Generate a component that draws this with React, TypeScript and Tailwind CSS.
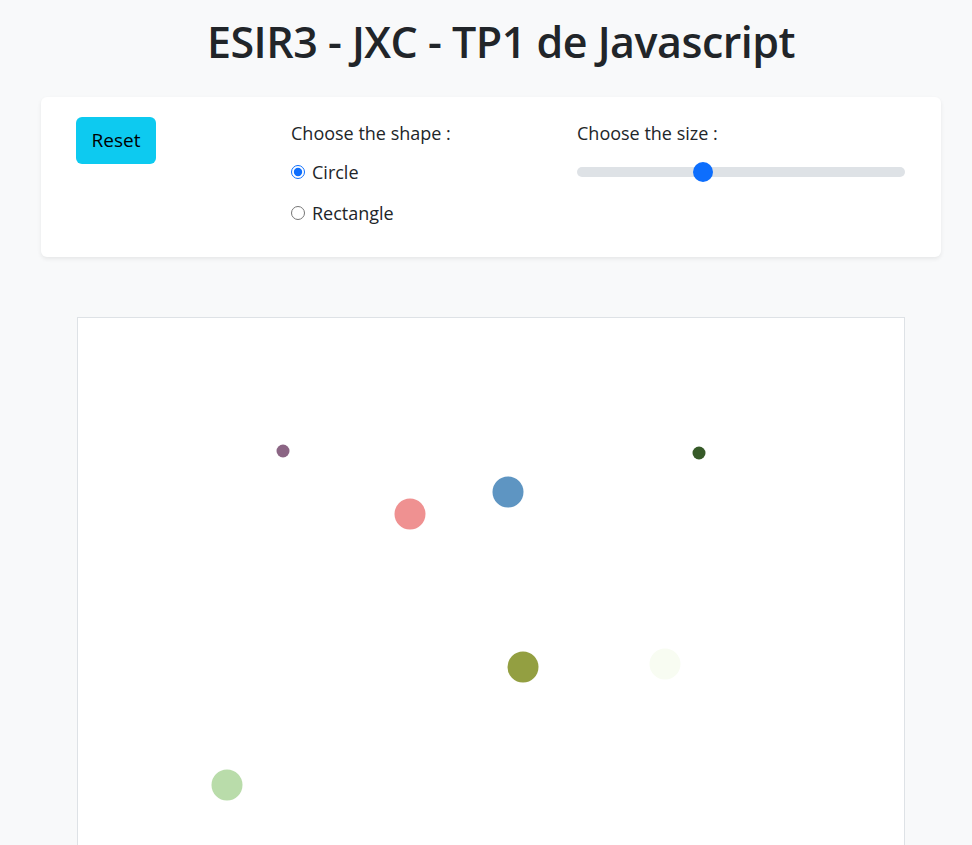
import { useState } from 'react';

const dots = [
  { x: 205, y: 133, r: 6.5, color: '#8b6584' },
  { x: 332, y: 196, r: 15.5, color: '#ef9191' },
  { x: 430, y: 174, r: 15.5, color: '#5e95c2' },
  { x: 621, y: 135, r: 6.5, color: '#365a28' },
  { x: 445, y: 349, r: 15.5, color: '#939f41' },
  { x: 587, y: 346, r: 15.5, color: '#f8fcf2' },
  { x: 149, y: 467, r: 15.5, color: '#b9dcaa' },
];

export default function App() {
  const [shape, setShape] = useState('circle');

  return (
    <div className="min-h-screen bg-[#f8f9fa] text-[#212529] font-['Open_Sans',sans-serif]">
      <h1 className="pl-[30px] pt-[16px] text-center text-[43px] font-semibold leading-[1.2] tracking-[-0.5px]">
        ESIR3 - JXC - TP1 de Javascript
      </h1>

      {/* Controls */}
      <div className="mx-[41px] mt-[29px] flex h-[160px] w-[900px] rounded-[6px] bg-white pl-[35px] pt-[20px] shadow-[0_2px_4px_rgba(0,0,0,0.075)]">
        <div className="w-[215px]">
          <button className="h-[47px] w-[80px] rounded-[6px] bg-[#0dcaf0] text-[19px] text-black">
            Reset
          </button>
        </div>

        <div className="w-[286px] pt-[1px] text-[18px] font-normal leading-[30px]">
          <p>Choose the shape :</p>
          <label className="mt-[9px] flex items-center gap-[7px]">
            <input
              type="radio"
              name="shape"
              checked={shape === 'circle'}
              onChange={() => setShape('circle')}
              className="m-0 h-[14px] w-[14px] accent-[#0d6efd]"
            />
            Circle
          </label>
          <label className="mt-[11px] flex items-center gap-[7px]">
            <input
              type="radio"
              name="shape"
              checked={shape === 'rectangle'}
              onChange={() => setShape('rectangle')}
              className="m-0 h-[14px] w-[14px] accent-[#0d6efd]"
            />
            Rectangle
          </label>
        </div>

        <div className="w-[328px] pt-[1px] text-[18px] font-normal leading-[30px]">
          <p>Choose the size :</p>
          <div className="relative mt-[19px] h-[10px] w-[328px] rounded-full bg-[#dee2e6]">
            <div className="absolute left-[116px] top-[-5px] h-[20px] w-[20px] rounded-full bg-[#0d6efd]" />
          </div>
        </div>
      </div>

      {/* Drawing area */}
      <div className="mx-[77px] mt-[60px] h-[600px] w-[828px] border border-[#dee2e6] bg-white">
        <svg width="826" height="598">
          {dots.map((d, i) => (
            <circle key={i} cx={d.x} cy={d.y} r={d.r} fill={d.color} />
          ))}
        </svg>
      </div>
    </div>
  );
}
